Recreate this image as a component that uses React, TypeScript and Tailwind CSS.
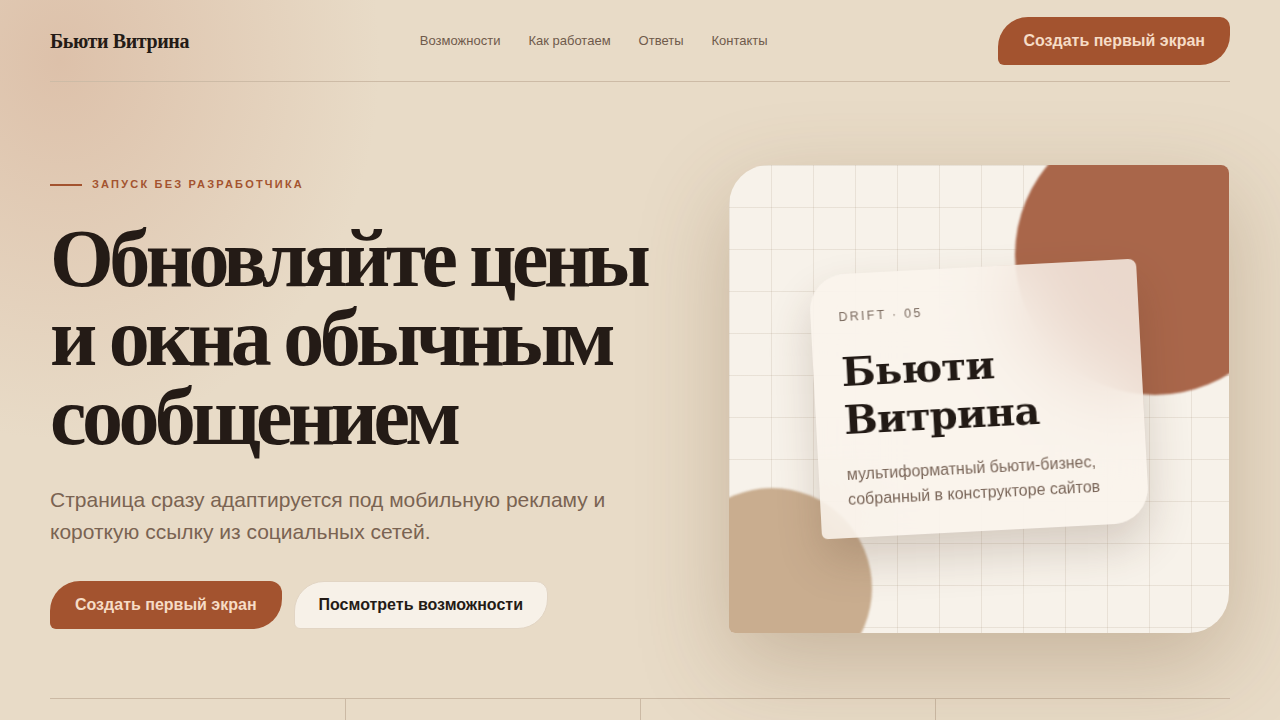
export default function App() {
  const nav = ["Возможности", "Как работаем", "Ответы", "Контакты"];

  return (
    <div className="relative min-h-screen overflow-hidden bg-[#e8dbc7] bg-[radial-gradient(ellipse_320px_380px_at_60px_60px,rgba(217,184,160,0.75),rgba(217,184,160,0)_100%)] font-['Liberation_Sans',Arial,sans-serif] text-[#241b16]">
      <div className="relative mx-auto max-w-[1180px]">
        <header className="flex h-[82px] items-center justify-between border-b border-[#cdbba6]">
          <div className="font-['Liberation_Serif',serif] text-[20px] font-bold tracking-[-0.02em] text-[#241b16]">
            Бьюти Витрина
          </div>
          <nav className="flex items-center gap-7 text-[13px] text-[#6f5a4b]">
            {nav.map((item) => (
              <a key={item} href="#">
                {item}
              </a>
            ))}
          </nav>
          <button className="h-12 rounded-[30px_10px_30px_6px] bg-[#a3532f] px-[25px] text-[16px] font-bold text-[#f6dcc6]">
            Создать первый экран
          </button>
        </header>

        <main className="grid grid-cols-[1fr_500px] items-center pr-px pt-[83px]">
          <div className="pt-[13px]">
            <div className="-mt-[6px] flex items-center gap-[10px]">
              <span className="h-[2px] w-8 bg-[#a3532f]" />
              <span className="text-[11px] font-bold uppercase tracking-[0.2em] text-[#a3532f]">
                Запуск без разработчика
              </span>
            </div>
            <h1 className="mt-[26px] font-['Liberation_Serif',serif] text-[82px] font-bold leading-[79px] tracking-[-0.055em] text-[#241b16]">
              Обновляйте цены
              <br />
              и окна обычным
              <br />
              сообщением
            </h1>
            <p className="mt-[28px] max-w-[575px] text-[21px] leading-[32px] text-[#7a6352]">
              Страница сразу адаптируется под мобильную рекламу и короткую
              ссылку из социальных сетей.
            </p>
            <div className="mt-[33px] flex gap-3">
              <button className="h-12 rounded-[30px_12px_30px_6px] bg-[#a3532f] px-[25px] text-[16px] font-bold text-[#f6dcc6]">
                Создать первый экран
              </button>
              <button className="h-12 rounded-[30px_12px_30px_6px] border border-[#e2d5c4] bg-[#f7f1e8] px-[24px] text-[16px] font-bold text-[#241b16]">
                Посмотреть возможности
              </button>
            </div>
          </div>

          <div className="relative flex h-[468px] items-center justify-center overflow-hidden rounded-[40px_8px_40px_6px] bg-[#f7f2ea] bg-[linear-gradient(rgba(170,150,125,0.18)_1px,transparent_1px),linear-gradient(90deg,rgba(170,150,125,0.18)_1px,transparent_1px)] bg-[size:42px_42px] shadow-[0_30px_90px_rgba(110,78,48,0.28)]">
            <div className="absolute left-[286px] top-[-50px] h-[280px] w-[280px] rounded-full bg-[#a9664a] blur-[1px]" />
            <div className="absolute left-[-57px] top-[323px] h-[200px] w-[200px] rounded-full bg-[#c9ad8f] blur-[1px]" />

            <div className="relative h-[264px] w-[328px] -rotate-3 rounded-[36px_8px_36px_6px] bg-[#faf4ec]/80 px-7 pt-[34px] shadow-[0_22px_45px_rgba(80,52,30,0.2)] backdrop-blur-2xl">
              <div className="text-[12.5px] tracking-[0.18em] text-[#7a6a5e]">
                DRIFT · 05
              </div>
              <div className="mt-[21px] font-['DejaVu_Serif',serif] text-[40px] font-bold leading-[48px] tracking-[-0.02em] text-[#221a15]">
                Бьюти
                <br />
                Витрина
              </div>
              <p className="mt-[18px] text-[16px] leading-[25px] text-[#7a6659]">
                мультиформатный бьюти-бизнес, собранный в конструкторе сайтов
              </p>
            </div>
          </div>
        </main>

        <section className="mt-[65px] grid grid-cols-4 border-t border-[#cbb9a4]">
          {[0, 1, 2, 3].map((i) => (
            <div
              key={i}
              className={
                i === 0 ? "h-16" : "h-16 border-l border-[#cbb9a4]"
              }
            />
          ))}
        </section>
      </div>
    </div>
  );
}
